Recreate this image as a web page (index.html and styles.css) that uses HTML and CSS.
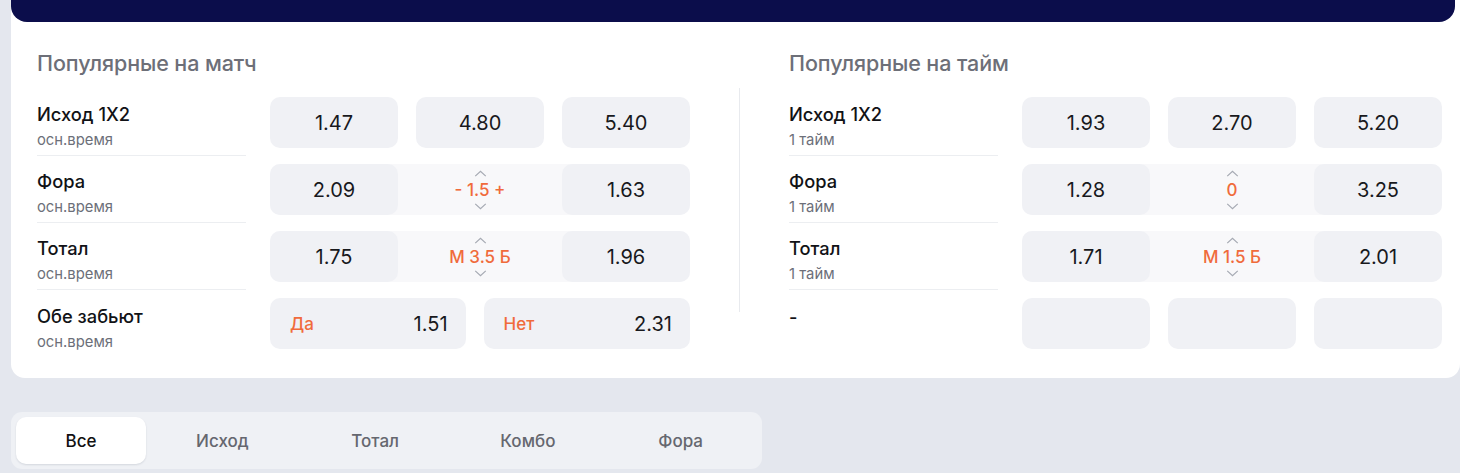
FILE: index.html
```html
<!DOCTYPE html>
<html lang="ru">
<head>
	<meta charset="UTF-8">
	<title>Популярные ставки</title>
	<link rel="stylesheet" href="styles.css">
</head>
<body>
<div class="wrp">
	<div class="card">
		<div class="hd"></div>
		<div class="cols">
			<div class="col">
				<div class="ttl">Популярные на матч</div>
				<div class="row">
					<div class="lbl"><b>Исход 1X2</b><span>осн.время</span></div>
					<div class="odds">
						<div class="btn">1.47</div>
						<div class="btn">4.80</div>
						<div class="btn">5.40</div>
					</div>
				</div>
				<div class="row">
					<div class="lbl"><b>Фора</b><span>осн.время</span></div>
					<div class="odds line">
						<div class="btn">2.09</div>
						<div class="mid">
							<svg class="chev" viewBox="0 0 14 8"><path d="M1 7L7 1.5L13 7"/></svg>
							<em>- 1.5 +</em>
							<svg class="chev" viewBox="0 0 14 8"><path d="M1 1L7 6.5L13 1"/></svg>
						</div>
						<div class="btn">1.63</div>
					</div>
				</div>
				<div class="row">
					<div class="lbl"><b>Тотал</b><span>осн.время</span></div>
					<div class="odds line">
						<div class="btn">1.75</div>
						<div class="mid">
							<svg class="chev" viewBox="0 0 14 8"><path d="M1 7L7 1.5L13 7"/></svg>
							<em>М 3.5 Б</em>
							<svg class="chev" viewBox="0 0 14 8"><path d="M1 1L7 6.5L13 1"/></svg>
						</div>
						<div class="btn">1.96</div>
					</div>
				</div>
				<div class="row last">
					<div class="lbl"><b>Обе забьют</b><span>осн.время</span></div>
					<div class="odds">
						<div class="btn yn"><em>Да</em>1.51</div>
						<div class="btn yn"><em>Нет</em>2.31</div>
					</div>
				</div>
			</div>
			<div class="vl"></div>
			<div class="col">
				<div class="ttl">Популярные на тайм</div>
				<div class="row">
					<div class="lbl"><b>Исход 1X2</b><span>1 тайм</span></div>
					<div class="odds">
						<div class="btn">1.93</div>
						<div class="btn">2.70</div>
						<div class="btn">5.20</div>
					</div>
				</div>
				<div class="row">
					<div class="lbl"><b>Фора</b><span>1 тайм</span></div>
					<div class="odds line">
						<div class="btn">1.28</div>
						<div class="mid">
							<svg class="chev" viewBox="0 0 14 8"><path d="M1 7L7 1.5L13 7"/></svg>
							<em>0</em>
							<svg class="chev" viewBox="0 0 14 8"><path d="M1 1L7 6.5L13 1"/></svg>
						</div>
						<div class="btn">3.25</div>
					</div>
				</div>
				<div class="row">
					<div class="lbl"><b>Тотал</b><span>1 тайм</span></div>
					<div class="odds line">
						<div class="btn">1.71</div>
						<div class="mid">
							<svg class="chev" viewBox="0 0 14 8"><path d="M1 7L7 1.5L13 7"/></svg>
							<em>М 1.5 Б</em>
							<svg class="chev" viewBox="0 0 14 8"><path d="M1 1L7 6.5L13 1"/></svg>
						</div>
						<div class="btn">2.01</div>
					</div>
				</div>
				<div class="row last">
					<div class="lbl top"><b>-</b></div>
					<div class="odds">
						<div class="btn"></div>
						<div class="btn"></div>
						<div class="btn"></div>
					</div>
				</div>
			</div>
		</div>
	</div>
	<div class="tabs">
		<div class="tab on">Все</div>
		<div class="tab">Исход</div>
		<div class="tab">Тотал</div>
		<div class="tab">Комбо</div>
		<div class="tab">Фора</div>
	</div>
</div>
</body>
</html>
```

FILE: styles.css
```css
html,body{
	margin: 0;
	padding: 0;
	background: #e4e7ee;
	font-family: Inter, "Noto Sans", sans-serif;
	color: #16171b;
}
.wrp{
	padding: 0 0 0 11px;
}
.card{
	background: #fff;
	border-radius: 0 0 14px 14px;
	padding-bottom: 21px;
}
.hd{
	height: 22px;
	margin-right: 5px;
	background: #0b0d4b;
	border-radius: 0 0 16px 16px;
}
.cols{
	display: grid;
	grid-template-columns: 653px 1px 654px;
	column-gap: 49px;
	padding: 29px 0 0 26px;
}
.vl{
	background: #e8eaee;
	margin-top: 37px;
	height: 224px;
}
.ttl{
	font-size: 21.5px;
	line-height: 24px;
	font-weight: 500;
	color: #6d6f78;
	margin-bottom: 14px;
	letter-spacing: -0.1px;
}
.row{
	display: grid;
	grid-template-columns: 209px 420px;
	column-gap: 24px;
	align-items: center;
	height: 67px;
}
.lbl{
	align-self: stretch;
	display: flex;
	flex-direction: column;
	justify-content: flex-end;
	padding-bottom: 6px;
	border-bottom: 1px solid #eceef1;
}
.last .lbl{border-bottom: none;}
.lbl.top{justify-content: flex-start;padding-top: 17px;}
.lbl b{
	font-size: 18.3px;
	line-height: 21px;
	font-weight: 500;
	color: #111216;
}
.lbl span{
	font-size: 14.8px;
	line-height: 18px;
	margin-top: 6px;
	color: #6c6f79;
}
.odds{
	display: flex;
	gap: 18px;
	height: 51px;
}
.odds.line{
	gap: 0;
	background: #f8f8fa;
	border-radius: 10px;
}
.btn{
	flex: 1 1 0;
	background: #f0f1f5;
	border-radius: 10px;
	display: flex;
	align-items: center;
	justify-content: center;
	font-size: 20px;
	color: #18191d;
}
.line .btn{flex: 0 0 128px;}
.btn.yn{
	flex: 1 1 auto;
	justify-content: space-between;
	padding: 0 18px 0 20px;
}
.btn em, .mid em{
	font-style: normal;
	color: #f06b3c;
	font-size: 17px;
	font-weight: 500;
}
.mid{
	flex: 1;
	display: flex;
	flex-direction: column;
	align-items: center;
	justify-content: center;
	gap: 4px;
}
.mid em{line-height: 18px;}
.chev{
	width: 13px;
	height: 7px;
	fill: none;
	stroke: #a6aab3;
	stroke-width: 1.4;
}
.tabs{
	display: flex;
	width: 741px;
	margin-top: 34px;
	padding: 5px;
	background: #eff1f5;
	border-radius: 11px;
}
.tab{
	flex: 1;
	height: 47px;
	display: flex;
	align-items: center;
	justify-content: center;
	font-size: 17px;
	font-weight: 500;
	color: #65676f;
}
.tab.on{
	flex: 0 0 130px;
	background: #fff;
	border-radius: 10px;
	color: #111;
	box-shadow: 0 1px 2px rgba(20,30,60,.12);
}
```
